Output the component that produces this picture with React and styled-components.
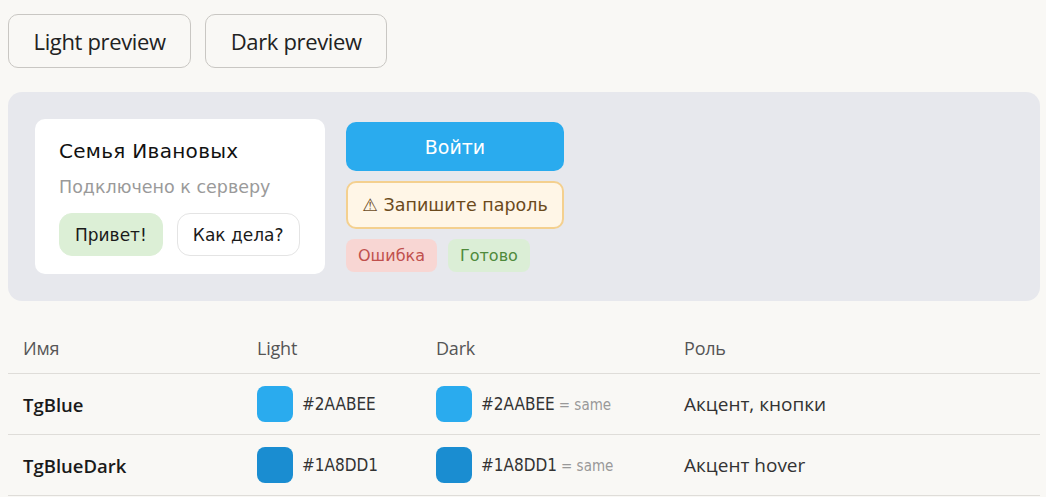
import React from "react";
import styled, { createGlobalStyle } from "styled-components";

const Global = createGlobalStyle`
  body {
    margin: 0;
    background: #f9f8f5;
    font-family: "Open Sans", "Noto Sans", sans-serif;
    color: #1d1d1f;
  }
`;

const Page = styled.div`
  padding: 14px 6px 0 8px;
`;

const Tabs = styled.div`
  display: flex;
  gap: 14px;
`;

const TabButton = styled.button`
  height: 54px;
  padding: 0 24.5px;
  border: 1px solid #c9c7c3;
  border-radius: 10px;
  background: #f9f8f5;
  font-family: "Open Sans", sans-serif;
  font-size: 22px;
  color: #222;
  letter-spacing: -0.35px;
`;

const Preview = styled.div`
  margin-top: 24px;
  background: #e7e8ed;
  border-radius: 14px;
  padding: 27px;
  display: flex;
  align-items: flex-start;
  gap: 21px;
  height: 209px;
  box-sizing: border-box;
  font-family: "DejaVu Sans", sans-serif;
`;

const Card = styled.div`
  width: 290px;
  height: 155px;
  box-sizing: border-box;
  background: #fff;
  border-radius: 10px;
  padding: 20px 24px;
`;

const CardTitle = styled.div`
  font-size: 20px;
  letter-spacing: 0.3px;
  color: #111;
`;

const CardSub = styled.div`
  margin-top: 14px;
  font-size: 17.5px;
  color: #9a9a9a;
`;

const Chips = styled.div`
  display: flex;
  gap: 14px;
  margin-top: 16px;
`;

const Chip = styled.div`
  height: 43px;
  box-sizing: border-box;
  padding: 0 15px;
  display: flex;
  align-items: center;
  border-radius: 13px;
  font-size: 17px;
  color: #1a1a1a;
  background: ${(p) => (p.$mine ? "#dcefd6" : "#fff")};
  border: 1px solid ${(p) => (p.$mine ? "#dcefd6" : "#e4e4e4")};
`;

const Side = styled.div`
  margin-top: 3px;
  width: 218px;
  display: flex;
  flex-direction: column;
  gap: 10px;
`;

const Primary = styled.button`
  height: 49px;
  border: none;
  border-radius: 10px;
  background: #2aabee;
  color: #fff;
  font-family: "DejaVu Sans", sans-serif;
  font-size: 19px;
`;

const Warning = styled.div`
  height: 48px;
  box-sizing: border-box;
  border: 2px solid #f4d08f;
  border-radius: 10px;
  background: #fff6e7;
  color: #6b4a1c;
  font-size: 17.5px;
  display: flex;
  align-items: center;
  justify-content: center;
`;

const Tags = styled.div`
  display: flex;
  gap: 11px;
`;

const Tag = styled.div`
  height: 33px;
  padding: 0 12px;
  display: flex;
  align-items: center;
  border-radius: 8px;
  font-size: 16px;
  background: ${(p) => (p.$ok ? "#dbeed6" : "#f8d6d3")};
  color: ${(p) => (p.$ok ? "#4f8a3b" : "#c0504d")};
`;

const Table = styled.div`
  margin-top: 22px;
  width: 1032px;
`;

const Row = styled.div`
  display: grid;
  grid-template-columns: 234px 179px 248px 1fr;
  align-items: center;
  height: ${(p) => (p.$head ? "51px" : "61px")};
  padding-left: 15px;
  border-bottom: 1.5px solid #dfddd9;
  box-sizing: border-box;
`;

const Head = styled.div`
  font-size: 18px;
  color: #555;
  letter-spacing: -0.2px;
`;

const Name = styled.div`
  font-size: 18.5px;
  font-weight: 600;
  color: #1a1a1a;
`;

const ColorCell = styled.div`
  display: flex;
  align-items: center;
  gap: 9px;
`;

const Swatch = styled.div`
  width: 36px;
  height: 36px;
  border-radius: 8px;
  background: ${(p) => p.$color};
`;

const Hex = styled.span`
  font-family: "DejaVu Sans Condensed", "DejaVu Sans", sans-serif;
  font-size: 17px;
  color: #333;
`;

const Same = styled.span`
  font-family: "DejaVu Sans Condensed", sans-serif;
  font-size: 15px;
  color: #999;
  margin-left: 4px;
`;

const Role = styled.div`
  font-size: 19px;
  color: #333;
`;

const colors = [
  { name: "TgBlue", light: "#2AABEE", dark: "#2AABEE", role: "Акцент, кнопки" },
  { name: "TgBlueDark", light: "#1A8DD1", dark: "#1A8DD1", role: "Акцент hover" },
];

export default function App() {
  return (
    <Page>
      <Global />
      <Tabs>
        <TabButton>Light preview</TabButton>
        <TabButton>Dark preview</TabButton>
      </Tabs>

      <Preview>
        <Card>
          <CardTitle>Семья Ивановых</CardTitle>
          <CardSub>Подключено к серверу</CardSub>
          <Chips>
            <Chip $mine>Привет!</Chip>
            <Chip>Как дела?</Chip>
          </Chips>
        </Card>
        <Side>
          <Primary>Войти</Primary>
          <Warning>⚠ Запишите пароль</Warning>
          <Tags>
            <Tag>Ошибка</Tag>
            <Tag $ok>Готово</Tag>
          </Tags>
        </Side>
      </Preview>

      <Table>
        <Row $head>
          <Head>Имя</Head>
          <Head>Light</Head>
          <Head>Dark</Head>
          <Head>Роль</Head>
        </Row>
        {colors.map((c) => (
          <Row key={c.name}>
            <Name>{c.name}</Name>
            <ColorCell>
              <Swatch $color={c.light} />
              <Hex>{c.light}</Hex>
            </ColorCell>
            <ColorCell>
              <Swatch $color={c.dark} />
              <Hex>
                {c.dark}
                {c.dark === c.light && <Same>= same</Same>}
              </Hex>
            </ColorCell>
            <Role>{c.role}</Role>
          </Row>
        ))}
      </Table>
    </Page>
  );
}
